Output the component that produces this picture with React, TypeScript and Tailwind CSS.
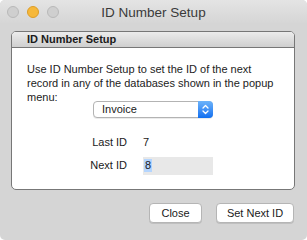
import React from 'react';

const font = { fontFamily: '"Liberation Sans", Arial, sans-serif' };

const TrafficLights: React.FC = () => (
  <div className="absolute left-[7px] top-[6px] flex gap-[8px]">
    <div className="w-[12px] h-[12px] rounded-full bg-[#cfcfcf] border border-[#b9b9b9]" />
    <div className="w-[12px] h-[12px] rounded-full bg-[#f6b83a] border border-[#dd9d27]" />
    <div className="w-[12px] h-[12px] rounded-full bg-[#cfcfcf] border border-[#b9b9b9]" />
  </div>
);

const App: React.FC = () => {
  return (
    <div className="w-[307px] h-[240px] bg-white" style={font}>
      <div className="w-full h-full rounded-[5px] bg-[#d5d5d5] flex flex-col text-[#1a1a1a]">
        {/* Title bar */}
        <div className="relative h-[24px] shrink-0 flex items-center justify-center rounded-t-[5px] bg-gradient-to-b from-[#e4e4e4] to-[#d5d5d5]">
          <TrafficLights />
          <span className="text-[13.5px] text-[#3a3a3a] leading-none mt-[1px]">ID Number Setup</span>
        </div>

        {/* Group box */}
        <div className="ml-[11px] mr-[12px] mt-[7px] h-[159px] rounded-[5px] border border-[#777] bg-white flex flex-col overflow-hidden">
          <div className="h-[16px] shrink-0 border-b border-[#777] bg-gradient-to-b from-[#ececec] to-[#cfcfcf] flex items-center pl-[15px]">
            <span className="text-[11px] font-bold leading-none">ID Number Setup</span>
          </div>

          <div className="pl-[15px] pt-[14px]">
            <p className="w-[252px] text-[11px] leading-[14px] text-[#222]">
              Use ID Number Setup to set the ID of the next record in any of the databases shown in the popup menu:
            </p>

            {/* Popup */}
            <div className="ml-[66px] mt-[-3px] w-[120px] h-[17px] flex rounded-[4px] border border-[#b3b3b3] bg-white shadow-[0_1px_0_rgba(0,0,0,0.08)]">
              <span className="flex-1 pl-[8px] text-[11px] leading-[15px]">Invoice</span>
              <div className="w-[15px] -my-px -mr-px rounded-r-[4px] bg-gradient-to-b from-[#6cb3fa] to-[#0c6ff0] flex items-center justify-center">
                <svg width="7" height="11" viewBox="0 0 7 11" fill="none" stroke="white" strokeWidth="1.3" strokeLinecap="round" strokeLinejoin="round">
                  <path d="M1 4 L3.5 1.5 L6 4" />
                  <path d="M1 7 L3.5 9.5 L6 7" />
                </svg>
              </div>
            </div>

            {/* ID rows */}
            <div className="mt-[16px] grid grid-cols-[100px_70px] gap-x-[16px] items-center text-[11px]">
              <span className="text-right">Last ID</span>
              <span className="h-[14px] leading-[14px]">7</span>
              <span className="text-right mt-[6px]">Next ID</span>
              <div className="mt-[6px] h-[18px] bg-[#e8e8e8] flex items-center pl-[1px]">
                <span className="bg-[#b4d5fe] leading-[13px] px-[1px]">8</span>
              </div>
            </div>
          </div>
        </div>

        {/* Buttons */}
        <div className="flex justify-end gap-[14px] mr-[13px] mt-[13px]">
          <button className="w-[53px] h-[20px] rounded-[4px] bg-white border border-[#b5b5b5] shadow-[0_1px_0_rgba(0,0,0,0.1)] text-[11px] leading-none text-[#1a1a1a]">
            Close
          </button>
          <button className="w-[78px] h-[20px] rounded-[4px] bg-white border border-[#b5b5b5] shadow-[0_1px_0_rgba(0,0,0,0.1)] text-[11px] leading-none text-[#1a1a1a]">
            Set Next ID
          </button>
        </div>
      </div>
    </div>
  );
};

export default App;
